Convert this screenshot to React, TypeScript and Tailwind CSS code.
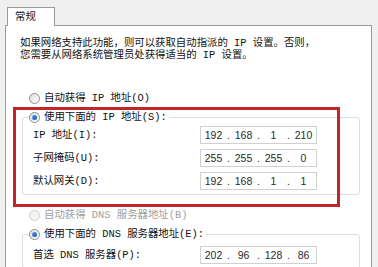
import { Fragment } from 'react';

const cjk = "font-['Liberation_Mono','Noto_Sans_CJK_SC',monospace] text-[10.4px] leading-[14px]";

function Radio({ checked, disabled }: { checked?: boolean; disabled?: boolean }) {
  return (
    <span
      className={`flex h-[11px] w-[11px] shrink-0 items-center justify-center rounded-full border ${
        disabled
          ? 'border-[#cdcdcd] bg-[#f4f4f4]'
          : 'border-[#8c8e90] bg-gradient-to-br from-[#dcdcdc] to-white'
      }`}
    >
      {checked && <span className="h-[5px] w-[5px] rounded-full bg-gradient-to-br from-[#5aa0e8] to-[#1a4fa8]" />}
    </span>
  );
}

function IpBox({ parts }: { parts: string[] }) {
  return (
    <div className="flex h-[18px] w-[117px] items-center border border-[#d0d0d0] bg-white font-['Liberation_Sans',sans-serif] text-[10.5px] text-[#2a2a2a]">
      {parts.map((p, i) => (
        <Fragment key={i}>
          {i > 0 && <span className="w-[5px] text-center">.</span>}
          <span className="w-[25px] text-center">{p}</span>
        </Fragment>
      ))}
    </div>
  );
}

function Row({ label, parts }: { label: string; parts: string[] }) {
  return (
    <div className="flex h-[18px] items-center">
      <span className="w-[167px]">{label}</span>
      <IpBox parts={parts} />
    </div>
  );
}

export default function App() {
  return (
    <div className={`relative flex h-[267px] w-[378px] flex-col overflow-hidden bg-[#f0f0f0] text-[#111] ${cjk}`}>
      {/* tab */}
      <div className="relative z-10 ml-[7px] mt-[7px] h-[19px] w-[48px] border border-b-0 border-[#9a9a9a] bg-white pl-[7px] leading-[18px]">
        常规
      </div>

      {/* panel */}
      <div className="-mt-px ml-[5px] w-[367px] flex-1 border border-[#9a9a9a] bg-white">
        <div className="mt-[11px] flex flex-col pl-[14px] leading-[12px]">
          <span>如果网络支持此功能，则可以获取自动指派的 IP 设置。否则，</span>
          <span>您需要从网络系统管理员处获得适当的 IP 设置。</span>
        </div>

        <div className="mt-[30px] flex h-[14px] items-center gap-[4px] pl-[23px]">
          <Radio />
          <span>自动获得 IP 地址(O)</span>
        </div>

        <fieldset className="ml-[16px] mt-[5px] w-[338px] rounded-[3px] border border-[#d5dfe5] px-0 pb-[4px]">
          <legend className="ml-[6px] flex h-[14px] items-center gap-[4px] pr-[2px]">
            <Radio checked />
            <span>使用下面的 IP 地址(S):</span>
          </legend>
          <div className="flex flex-col gap-[5px] pl-[10px] pt-[2px]">
            <Row label="IP 地址(I):" parts={['192', '168', '1', '210']} />
            <Row label="子网掩码(U):" parts={['255', '255', '255', '0']} />
            <Row label="默认网关(D):" parts={['192', '168', '1', '1']} />
          </div>
        </fieldset>

        <div className="mt-[13px] flex h-[14px] items-center gap-[4px] pl-[23px] text-[#a0a0a0]">
          <Radio disabled />
          <span>自动获得 DNS 服务器地址(B)</span>
        </div>

        <fieldset className="ml-[16px] mt-[5px] w-[338px] rounded-[3px] border border-[#d5dfe5] px-0 pb-[4px]">
          <legend className="ml-[6px] flex h-[14px] items-center gap-[4px] pr-[2px]">
            <Radio checked />
            <span>使用下面的 DNS 服务器地址(E):</span>
          </legend>
          <div className="flex flex-col gap-[5px] pl-[10px] pt-[5px]">
            <Row label="首选 DNS 服务器(P):" parts={['202', '96', '128', '86']} />
          </div>
        </fieldset>
      </div>

      {/* red annotation frame */}
      <div className="pointer-events-none absolute left-[13px] top-[107px] h-[100px] w-[327px] border-[3px] border-[#c0252a]" />
    </div>
  );
}
